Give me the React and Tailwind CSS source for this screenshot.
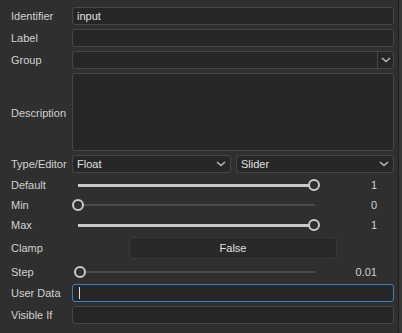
import React from 'react';

const Chevron = () => (
  <svg width="10" height="6" viewBox="0 0 10 6" className="shrink-0">
    <path d="M1 1 L5 4.5 L9 1" fill="none" stroke="#b8b8b8" strokeWidth="1.6" />
  </svg>
);

const Label = ({ children, className = '' }) => (
  <div className={`w-[61px] shrink-0 text-[11px] leading-none ${className}`}>{children}</div>
);

const Field = ({ children, focused = false, className = '' }) => (
  <div
    className={`flex-1 h-[18px] rounded-[3px] bg-[#262626] border flex items-center px-[4px] ${
      focused ? 'border-[#3d7fc1]' : 'border-[#474747]'
    } ${className}`}
  >
    {children}
  </div>
);

const Slider = ({ pos, value }) => {
  // pos is 0..1 along the track
  return (
    <div className="flex-1 flex items-center">
      <div className="relative w-[249px] h-[14px]">
        <div className="absolute left-[6px] right-[6px] top-[6px] h-[2px] bg-[#4a4a4a]" />
        <div
          className="absolute left-[6px] top-[6px] h-[3px] -mt-[0.5px] bg-[#c9c9c9]"
          style={{ width: `${pos * 236}px` }}
        />
        <div
          className="absolute top-[1px] w-[12px] h-[12px] rounded-full border-[2.5px] border-[#c9c9c9] bg-[#303030]"
          style={{ left: `${pos * 236}px` }}
        />
      </div>
      <div className="w-[57px] text-right text-[11px] leading-none pr-[1px]">{value}</div>
    </div>
  );
};

const App = () => {
  return (
    <div
      className="w-[402px] h-[333px] bg-[#2f2f2f] text-[#d2d2d2] flex overflow-hidden"
      style={{ fontFamily: '"Liberation Sans", Arial, sans-serif' }}
    >
      <div className="flex-1 flex flex-col pl-[11px] pr-[4px] pt-[7px]">
        <div className="flex items-center h-[18px]">
          <Label>Identifier</Label>
          <Field>
            <span className="text-[11px] leading-none text-[#e0e0e0]">input</span>
          </Field>
        </div>
        <div className="flex items-center h-[18px] mt-[4px]">
          <Label>Label</Label>
          <Field />
        </div>
        <div className="flex items-center h-[18px] mt-[4px]">
          <Label>Group</Label>
          <Field className="pr-0 justify-end">
            <div className="h-full w-[16px] border-l border-[#474747] flex items-center justify-center">
              <Chevron />
            </div>
          </Field>
        </div>
        <div className="flex items-center h-[78px] mt-[4px]">
          <Label className="pt-[2px]">Description</Label>
          <div className="flex-1 h-full rounded-[3px] bg-[#262626] border border-[#474747]" />
        </div>
        <div className="flex items-center h-[18px] mt-[4px]">
          <Label>Type/Editor</Label>
          <div className="flex-1 flex gap-[5px]">
            <div className="w-[159px] h-[18px] rounded-[3px] bg-[#262626] border border-[#474747] flex items-center justify-between pl-[4px] pr-[4px]">
              <span className="text-[11px] leading-none text-[#e0e0e0]">Float</span>
              <Chevron />
            </div>
            <div className="flex-1 h-[18px] rounded-[3px] bg-[#262626] border border-[#474747] flex items-center justify-between pl-[4px] pr-[4px]">
              <span className="text-[11px] leading-none text-[#e0e0e0]">Slider</span>
              <Chevron />
            </div>
          </div>
        </div>
        <div className="flex items-center h-[20px] mt-[2px]">
          <Label>Default</Label>
          <Slider pos={1} value="1" />
        </div>
        <div className="flex items-center h-[20px]">
          <Label>Min</Label>
          <Slider pos={0} value="0" />
        </div>
        <div className="flex items-center h-[20px]">
          <Label>Max</Label>
          <Slider pos={1} value="1" />
        </div>
        <div className="flex items-center h-[22px] mt-[2px]">
          <Label>Clamp</Label>
          <div className="w-[57px] shrink-0" />
          <div className="w-[208px] h-[22px] rounded-[3px] bg-[#292929] border border-[#3a3a3a] flex items-center justify-center text-[11px] leading-none text-[#e0e0e0]">
            False
          </div>
        </div>
        <div className="flex items-center h-[20px] mt-[3px]">
          <Label>Step</Label>
          <Slider pos={0.01} value="0.01" />
        </div>
        <div className="flex items-center h-[18px] mt-[2px]">
          <Label>User Data</Label>
          <Field focused>
            <div className="w-px h-[12px] bg-[#e0e0e0] ml-[2px]" />
          </Field>
        </div>
        <div className="flex items-center h-[18px] mt-[4px]">
          <Label>Visible If</Label>
          <Field />
        </div>
      </div>
      <div className="w-[4px] h-full border-l border-[#1f1f1f] bg-[#383838]" />
    </div>
  );
};

export default App;
